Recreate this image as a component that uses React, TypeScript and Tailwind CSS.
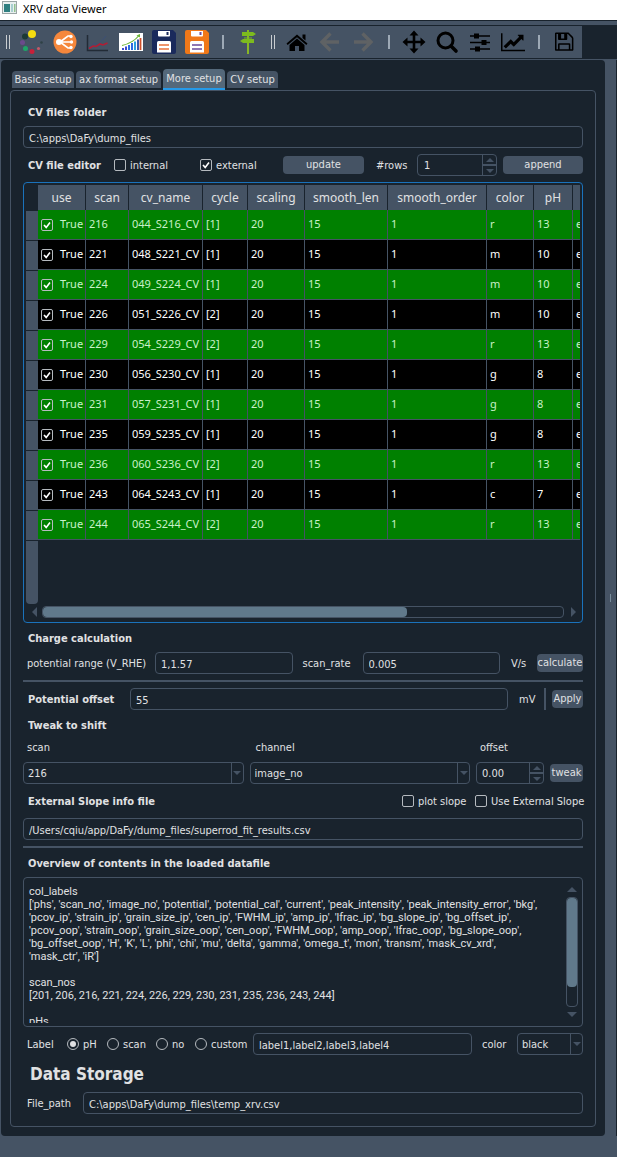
import React, { useState } from "react";

type IconProps = { children: React.ReactNode; box?: string };

function Svg({ children, box = "0 0 24 24" }: IconProps) {
  return (
    <svg viewBox={box} className="h-6 w-6" aria-hidden="true">
      {children}
    </svg>
  );
}

function Tool({ label, children }: { label: string; children: React.ReactNode }) {
  return (
    <button type="button" aria-label={label} className="flex w-[33px] shrink-0 items-center justify-center">
      {children}
    </button>
  );
}

function Grip() {
  return (
    <div className="flex w-4 shrink-0 items-center justify-center pl-0.5">
      <div className="h-3.5 w-1 border-x border-[#c9cdd0]" />
    </div>
  );
}

function Separator() {
  return (
    <div className="flex w-[18px] shrink-0 items-center justify-center pl-0.5">
      <div className="h-3.5 w-0.5 bg-[#9da9b5]" />
    </div>
  );
}

function Floppy({ body, line, dot }: { body: string; line: string; dot: string }) {
  return (
    <Svg>
      <path d="M2 0h19l3 3v19a2 2 0 0 1-2 2H2a2 2 0 0 1-2-2V2a2 2 0 0 1 2-2z" fill={body} />
      <path d="M6 1h12v4.500a1 1 0 0 1-1 1H7a1 1 0 0 1-1-1z" fill="#fff" />
      <rect x="14.500" y="2" width="2" height="3" fill={dot} />
      <path d="M6.500 11h11a1.500 1.500 0 0 1 1.500 1.500V22.500H5V12.500A1.500 1.500 0 0 1 6.500 11z" fill="#fff" />
      <path d="M7 15h10M7 19h10" stroke={line} strokeWidth="1.600" />
    </Svg>
  );
}

function Toolbar() {
  return (
    <div className="flex h-8 items-stretch bg-[#19232d]">
      <div className="-ml-px flex items-stretch bg-[#455364] pr-0.5">
        <Grip />
        <Tool label="Load">
          <Svg>
            <circle cx="12" cy="4" r="4" fill="#f5dc10" />
            <circle cx="5" cy="6.500" r="3" fill="#1c3a35" />
            <circle cx="2.500" cy="12.500" r="2.500" fill="#6b4a8c" />
            <circle cx="5.500" cy="18.500" r="2.500" fill="#1fa567" />
            <circle cx="12" cy="21.500" r="2.500" fill="#c8203a" />
            <circle cx="18.500" cy="18.500" r="1.600" fill="#c25a68" />
            <circle cx="21.500" cy="12.500" r="1.300" fill="#2f4146" />
          </Svg>
        </Tool>
        <Tool label="Connect">
          <Svg>
            <circle cx="12" cy="12" r="11.500" fill="#f5873c" />
            <path d="M5 12h13M7 12l8-6h3M7 12l8 6h3" stroke="#fff" strokeWidth="1.600" fill="none" />
            <circle cx="6" cy="12" r="3" fill="#fff" />
            <circle cx="18" cy="6.500" r="1.700" fill="#fff" />
            <circle cx="18.500" cy="12" r="1.700" fill="#fff" />
            <circle cx="18" cy="17.500" r="1.700" fill="#fff" />
          </Svg>
        </Tool>
        <Tool label="Plot">
          <Svg>
            <path d="M1.500 5v15.500H22" stroke="#222b36" strokeWidth="1.500" fill="none" />
            <path d="M3 18l5-5 4 2 8-9" stroke="#3b4f78" strokeWidth="0.900" fill="none" />
            <path d="M3 18.500l4-2.500 3 .500 4-2.500 3 1 4.500-2" stroke="#b01e35" strokeWidth="1.600" fill="none" />
          </Svg>
        </Tool>
        <Tool label="Bar chart">
          <Svg>
            <rect y="3" width="24" height="18" fill="#fff" />
            <path d="M4 18v2M7 16.500v3.500" stroke="#3b49d0" strokeWidth="2" />
            <path d="M10 15v5M13 13v7" stroke="#2a6be0" strokeWidth="2" />
            <path d="M16 11.500v8.500" stroke="#2aa0e0" strokeWidth="2" />
            <path d="M19 9.500v10.500" stroke="#3a5aa8" strokeWidth="2" />
            <path d="M21.500 8v12" stroke="#d0502a" strokeWidth="1.800" />
            <path d="M3 15.500Q14 13 20 5.500" stroke="#6cb536" strokeWidth="1.200" fill="none" />
            <path d="M17.500 5.500L21 4v3.500z" fill="#6cb536" />
          </Svg>
        </Tool>
        <Tool label="Save data">
          <Floppy body="#1a2a5c" line="#e8703a" dot="#1a2a5c" />
        </Tool>
        <Tool label="Save project">
          <Floppy body="#f07818" line="#6a4a9c" dot="#6a4a9c" />
        </Tool>
        <Separator />
        <Tool label="Guide">
          <Svg>
            <path d="M12 0v24" stroke="#8fc31f" strokeWidth="1.800" />
            <path d="M6 2h11l3 2-3 2H6zM18 9H7l-3 2 3 2h11zM8 7.500h8v1H8z" fill="#7dbb1e" />
          </Svg>
        </Tool>
        <Grip />
        <Tool label="Home">
          <Svg>
            <path d="M12 4.500l10.500 9-1.200 1.500L12 7.200 2.700 15l-1.200-1.500zM17.500 4.500h3v6l-3-2.600z" fill="#000" />
            <path d="M12 8.600l7.500 6.400v6h-5.500v-5h-4v5H4.500v-6z" fill="#000" />
          </Svg>
        </Tool>
        <Tool label="Back">
          <Svg>
            <path d="M12.500 3.500L4 12l8.500 8.500M4.500 12H21" stroke="#5f6264" strokeWidth="3.400" fill="none" />
          </Svg>
        </Tool>
        <Tool label="Forward">
          <Svg>
            <path d="M11.500 3.500L20 12l-8.500 8.500M19.500 12H3" stroke="#5f6264" strokeWidth="3.400" fill="none" />
          </Svg>
        </Tool>
        <Separator />
        <Tool label="Pan">
          <Svg>
            <path d="M12 3v18M3 12h18" stroke="#000" strokeWidth="2.600" />
            <path d="M12 .500l4.500 5h-9zM12 23.500l4.500-5h-9zM.500 12l5-4.500v9zM23.500 12l-5-4.500v9z" fill="#000" />
          </Svg>
        </Tool>
        <Tool label="Zoom">
          <Svg>
            <circle cx="10.500" cy="10.500" r="7.500" stroke="#000" strokeWidth="3" fill="none" />
            <path d="M16 16l5 5" stroke="#000" strokeWidth="3.600" strokeLinecap="round" />
          </Svg>
        </Tool>
        <Tool label="Subplots">
          <Svg>
            <path d="M2 6h20M2 12.500h20M2 19h20" stroke="#000" strokeWidth="1.500" />
            <path d="M6 3.500h5v5H6zM13.500 10h5v5h-5zM7 16.500h5v5H7z" fill="#000" />
          </Svg>
        </Tool>
        <Tool label="Edit axes">
          <Svg box="0 -200 2048 1900">
            <path
              fill="#000"
              d="M2048 1408v128h-2048v-1536h128v1408h1920zM1920 160v435q0 21-19.500 29.500t-35.500-7.500l-121-121-633 633q-10 10-23 10t-23-10l-233-233-416 416-192-192 585-585q10-10 23-10t23 10l233 233 464-464-121-121q-16-16-7.500-35.500t29.500-19.500h435q14 0 23 9t9 23z"
            />
          </Svg>
        </Tool>
        <Separator />
        <Tool label="Save figure">
          <Svg box="-120 -70 2000 2000">
            <path
              fill="#000"
              d="M512 1536h768v-384h-768v384zM1408 1536h128v-896q0-14-10-38.500t-20-34.500l-281-281q-10-10-34-20t-39-10v416q0 40-28 68t-68 28h-576q-40 0-68-28t-28-68v-416h-128v1280h128v-416q0-40 28-68t68-28h832q40 0 68 28t28 68v416zM896 608v-320q0-13-9.500-22.500t-22.500-9.500h-192q-13 0-22.500 9.500t-9.500 22.500v320q0 13 9.500 22.500t22.500 9.500h192q13 0 22.500-9.500t9.500-22.500zM1664 640v928q0 40-28 68t-68 28h-1344q-40 0-68-28t-28-68v-1344q0-40 28-68t68-28h928q40 0 88 20t76 48l280 280q28 28 48 76t20 88z"
            />
          </Svg>
        </Tool>
      </div>
    </div>
  );
}

const inputBase =
  "h-[22px] min-w-0 rounded border border-[#455364] bg-[#19232d] text-[11px] text-[#e0e1e3] outline-none";

function TextInput({ label, value, className }: { label: string; value: string; className: string }) {
  return <input aria-label={label} defaultValue={value} className={`${inputBase} px-[5px] pt-0.5 ${className}`} />;
}

function Heading({ children }: { children: React.ReactNode }) {
  return <h2 className="h-[17px] pl-[5px] text-[11px] leading-5 font-bold">{children}</h2>;
}

function PushButton({ children, className }: { children: React.ReactNode; className: string }) {
  return (
    <button
      type="button"
      className={`mb-px flex h-[18px] shrink-0 items-center justify-center rounded bg-[#455364] text-[11px] leading-[18px] ${className}`}
    >
      {children}
    </button>
  );
}

function TickBox({ checked, label }: { checked: boolean; label?: string }) {
  return (
    <span className="grid h-3 w-3 shrink-0">
      <input
        type="checkbox"
        defaultChecked={checked}
        aria-label={label}
        className="peer col-start-1 row-start-1 h-3 w-3 appearance-none rounded-xs border border-[#b5babf]"
      />
      <svg
        viewBox="0 0 12 12"
        aria-hidden="true"
        className="pointer-events-none invisible col-start-1 row-start-1 h-3 w-3 peer-checked:visible"
      >
        <path d="M3 6l2.200 2.400L9 3.500" stroke="#fff" strokeWidth="1.600" fill="none" />
      </svg>
    </span>
  );
}

function CheckField({ label, checked, className = "" }: { label: string; checked: boolean; className?: string }) {
  return (
    <label className={`flex shrink-0 items-center gap-1 ${className}`}>
      <TickBox checked={checked} />
      <span className="pt-0.5 whitespace-nowrap">{label}</span>
    </label>
  );
}

function Arrow({ d }: { d: string }) {
  return (
    <svg viewBox="0 0 8 4" className="h-1 w-2" aria-hidden="true">
      <path d={d} fill="#455364" />
    </svg>
  );
}

const UP = "M0 4L4 0l4 4z";
const DOWN = "M0 0l4 4 4-4z";

function SpinBox({ label, value, className }: { label: string; value: string; className: string }) {
  return (
    <div className={`flex h-[22px] shrink-0 rounded border border-[#455364] ${className}`}>
      <input aria-label={label} defaultValue={value} className="w-0 grow bg-transparent pt-0.5 text-[11px] outline-none" />
      <div className="flex w-[14px] shrink-0 flex-col border-l border-[#455364]">
        <button type="button" aria-label={`Increase ${label}`} className="flex h-[10px] items-center justify-center border-b border-[#455364]">
          <Arrow d={UP} />
        </button>
        <button type="button" aria-label={`Decrease ${label}`} className="flex h-[10px] items-center justify-center border-t border-[#455364]">
          <Arrow d={DOWN} />
        </button>
      </div>
    </div>
  );
}

function DropDown({ label, value, className }: { label: string; value: string; className: string }) {
  return (
    <div className={`relative h-[22px] min-w-0 ${className}`}>
      <select
        aria-label={label}
        defaultValue={value}
        className="h-full w-full appearance-none rounded border border-[#455364] bg-[#19232d] pt-0.5 pr-4 pl-1 text-[11px] text-[#e0e1e3] outline-none"
      >
        <option>{value}</option>
      </select>
      <span className="pointer-events-none absolute inset-y-px right-px flex w-3 items-center justify-center border-l border-[#455364]">
        <Arrow d={DOWN} />
      </span>
    </div>
  );
}

const columns = [
  ["use", "w-12"],
  ["scan", "w-[43px]"],
  ["cv_name", "w-[74px]"],
  ["cycle", "w-[45px]"],
  ["scaling", "w-[57px]"],
  ["smooth_len", "w-[83px]"],
  ["smooth_order", "w-[99px]"],
  ["color", "w-[47px]"],
  ["pH", "w-[39px]"],
];

const rows = [
  ["216", "044_S216_CV", "[1]", "r", "13"],
  ["221", "048_S221_CV", "[1]", "m", "10"],
  ["224", "049_S224_CV", "[1]", "m", "10"],
  ["226", "051_S226_CV", "[2]", "m", "10"],
  ["229", "054_S229_CV", "[2]", "r", "13"],
  ["230", "056_S230_CV", "[1]", "g", "8"],
  ["231", "057_S231_CV", "[1]", "g", "8"],
  ["235", "059_S235_CV", "[1]", "g", "8"],
  ["236", "060_S236_CV", "[2]", "r", "13"],
  ["243", "064_S243_CV", "[1]", "c", "7"],
  ["244", "065_S244_CV", "[2]", "r", "13"],
];

function CvTable() {
  return (
    <div className="rounded border border-[#1a72bb] px-0.5 pt-0.5 pb-1 font-['Noto_Sans',sans-serif]">
      <div className="overflow-hidden">
        <table className="w-[627px] table-fixed border-separate border-spacing-0 text-[11px]">
          <thead>
            <tr className="h-[25px]">
              <td className="w-3" />
              {columns.map(([name, width]) => (
                <th key={name} className={`${width} border-r border-[#19232d] bg-[#455364] p-0 text-[12px] leading-6 font-normal`}>
                  {name}
                </th>
              ))}
              <th className="bg-[#455364]" aria-label="electrolyte" />
            </tr>
          </thead>
          <tbody>
            {rows.map(([scan, name, cycle, color, ph], i) => {
              const cells = [scan, name, cycle, "20", "15", "1", color, ph];
              return (
                <tr key={scan} className={`h-[30px] ${i % 2 ? "bg-black text-white" : "bg-[#008000] text-[#c8f0c8]"}`}>
                  <th aria-label={`row ${i + 1}`} className="border-t border-[#19232d] bg-[#455364] p-0" />
                  <td className="border-r border-b border-[#455364] p-0">
                    <div className="flex items-center gap-[7px] pl-[3px]">
                      <TickBox checked label={`use scan ${scan}`} />
                      <span>True</span>
                    </div>
                  </td>
                  {cells.map((c, k) => (
                    <td key={k} className="border-r border-b border-[#455364] p-0 pl-[3px] whitespace-nowrap">
                      {c}
                    </td>
                  ))}
                  <td className="border-b border-[#455364] p-0 pl-[3px]">e</td>
                </tr>
              );
            })}
            <tr className="h-16">
              <th aria-label="unused rows" className="rounded-b border-t border-[#19232d] bg-[#455364]" />
            </tr>
          </tbody>
        </table>
      </div>
      <div className="mt-0.5 flex h-3 items-center gap-[5px] pr-0.5 pl-1.5">
        <svg viewBox="0 0 5 10" className="h-2.5 w-[5px]" aria-hidden="true">
          <path d="M5 0v10L0 5z" fill="#455364" />
        </svg>
        <div className="h-3 grow rounded border border-[#455364]">
          <div className="h-2.5 w-[70%] rounded bg-[#60798b]" />
        </div>
        <svg viewBox="0 0 5 10" className="mx-0.5 h-2.5 w-[5px]" aria-hidden="true">
          <path d="M0 0v10l5-5z" fill="#455364" />
        </svg>
      </div>
    </div>
  );
}

const overview = `col_labels
['phs', 'scan_no', 'image_no', 'potential', 'potential_cal', 'current', 'peak_intensity', 'peak_intensity_error', 'bkg',
'pcov_ip', 'strain_ip', 'grain_size_ip', 'cen_ip', 'FWHM_ip', 'amp_ip', 'lfrac_ip', 'bg_slope_ip', 'bg_offset_ip',
'pcov_oop', 'strain_oop', 'grain_size_oop', 'cen_oop', 'FWHM_oop', 'amp_oop', 'lfrac_oop', 'bg_slope_oop',
'bg_offset_oop', 'H', 'K', 'L', 'phi', 'chi', 'mu', 'delta', 'gamma', 'omega_t', 'mon', 'transm', 'mask_cv_xrd',
'mask_ctr', 'iR']

scan_nos
[201, 206, 216, 221, 224, 226, 229, 230, 231, 235, 236, 243, 244]

pHs`;

function Rule() {
  return <div className="h-0.5 bg-[#455364]" />;
}

function RadioField({ label, checked, onSelect, className }: { label: string; checked: boolean; onSelect: () => void; className: string }) {
  return (
    <label className={`flex shrink-0 items-center gap-1 ${className}`}>
      <span className="grid h-3 w-3">
        <input
          type="radio"
          name="label-kind"
          checked={checked}
          onChange={onSelect}
          className="peer col-start-1 row-start-1 h-3 w-3 appearance-none rounded-full border border-[#b5babf]"
        />
        <span className="invisible col-start-1 row-start-1 m-auto h-1.5 w-1.5 rounded-full bg-[#e0e1e3] peer-checked:visible" />
      </span>
      <span className="pt-0.5">{label}</span>
    </label>
  );
}

const tabs = [
  ["Basic setup", "w-[62px]"],
  ["ax format setup", "w-[85px]"],
  ["More setup", "w-[62px]"],
  ["CV setup", "w-[51px]"],
];

export default function App() {
  const [tab, setTab] = useState("More setup");
  const [kind, setKind] = useState("pH");

  return (
    <div className="flex min-h-screen flex-col bg-[#455364] font-['DejaVu_Sans_Condensed','Noto_Sans',sans-serif] text-[11px] text-[#e0e1e3]">
      <header className="flex h-5 items-start gap-[6px] bg-white pl-0.5 text-black">
        <svg viewBox="0 0 15 13" className="mt-px h-[13px] w-[15px]" aria-hidden="true">
          <rect x=".5" y=".5" width="14" height="12" fill="#e8efef" stroke="#9aa5a5" />
          <rect x="2" y="3" width="6" height="8" fill="#2f7f80" />
          <rect x="9" y="3" width="2" height="8" fill="#a8cfd0" />
          <rect x="12" y="3" width="1.500" height="8" fill="#8fc08f" />
        </svg>
        <h1 className="font-['Noto_Sans',sans-serif] text-[11px] leading-[18px]">XRV data Viewer</h1>
      </header>
      <div className="h-1.5 border-y border-[#19232d]" />
      <Toolbar />
      <div className="mb-px h-px bg-[#19232d]" />

      <div className="flex">
        <main className="min-w-0 grow pl-px">
          <div className="rounded bg-[#19232d] px-[9px] pt-[9px] pb-[9px]">
            <div role="tablist" className="flex h-[21px] items-end gap-0.5 pl-0.5">
              {tabs.map(([name, width]) => (
                <button
                  key={name}
                  type="button"
                  role="tab"
                  aria-selected={tab === name}
                  onClick={() => setTab(name)}
                  className={`${width} shrink-0 rounded-t whitespace-nowrap ${
                    tab === name
                      ? "h-[21px] border-b-2 border-[#259ae9] bg-[#54687a] leading-[19px]"
                      : "mb-0.5 h-[17px] bg-[#455364] leading-[18px]"
                  }`}
                >
                  {name}
                </button>
              ))}
            </div>
            <div className="flex flex-col gap-1.5 rounded border border-[#455364] p-3">
              <Heading>CV files folder</Heading>
              <TextInput label="CV files folder" value={"C:\\apps\\DaFy\\dump_files"} className="w-full" />

              <div className="flex h-[22px] items-center">
                <h2 className="w-[91px] shrink-0 pt-0.5 pl-[5px] font-bold whitespace-nowrap">CV file editor</h2>
                <CheckField label="internal" checked={false} className="w-[86px]" />
                <CheckField label="external" checked className="w-[83px]" />
                <PushButton className="w-[81px]">update</PushButton>
                <span className="w-[53px] shrink-0 pt-0.5 pl-3">#rows</span>
                <SpinBox label="rows" value="1" className="w-20 pl-1.5" />
                <PushButton className="ml-1.5 w-20 grow">append</PushButton>
              </div>

              <CvTable />

              <Heading>Charge calculation</Heading>
              <div className="flex h-[22px] items-center">
                <span className="w-[132px] shrink-0 pt-0.5 pl-1 whitespace-nowrap">potential range (V_RHE)</span>
                <TextInput label="potential range" value="1,1.57" className="w-0 grow" />
                <span className="w-[70px] shrink-0 pt-0.5 pl-2.5">scan_rate</span>
                <TextInput label="scan rate" value="0.005" className="w-0 grow" />
                <span className="w-[37px] shrink-0 pt-0.5 pl-[11px]">V/s</span>
                <PushButton className="w-[46px]">calculate</PushButton>
              </div>
              <Rule />
              <div className="flex h-[22px] items-center">
                <h2 className="w-[107px] shrink-0 pt-0.5 pl-[5px] font-bold whitespace-nowrap">Potential offset</h2>
                <TextInput label="potential offset" value="55" className="w-0 grow" />
                <span className="w-9 shrink-0 pt-0.5 pl-[11px]">mV</span>
                <div className="mr-1.5 h-[22px] w-0.5 bg-[#455364]" />
                <PushButton className="w-[31px]">Apply</PushButton>
              </div>
              <Heading>Tweak to shift</Heading>
              <div className="flex h-[17px] items-center">
                <span className="w-0 grow pt-0.5 pl-1">scan</span>
                <span className="w-0 grow pt-0.5 pl-1">channel</span>
                <span className="w-[103px] shrink-0 pt-0.5">offset</span>
              </div>
              <div className="flex h-[22px] items-center gap-1.5">
                <DropDown label="scan" value="216" className="w-0 grow" />
                <DropDown label="channel" value="image_no" className="w-0 grow" />
                <SpinBox label="offset" value="0.00" className="w-[68px] pl-[5px]" />
                <PushButton className="w-[33px]">tweak</PushButton>
              </div>
              <div className="flex h-[22px] items-center">
                <h2 className="grow pt-0.5 pl-[5px] font-bold">External Slope info file</h2>
                <CheckField label="plot slope" checked={false} className="w-[73px]" />
                <CheckField label="Use External Slope" checked={false} className="w-[108px]" />
              </div>
              <TextInput label="slope info file" value="/Users/cqiu/app/DaFy/dump_files/superrod_fit_results.csv" className="w-full" />
              <Rule />
              <Heading>Overview of contents in the loaded datafile</Heading>

              <div className="flex h-[150px] rounded border border-[#455364] py-[3px] pr-1">
                <textarea
                  readOnly
                  aria-label="Overview of contents"
                  value={overview}
                  className="w-0 grow resize-none overflow-hidden pt-1 pl-[5px] font-['Roboto',sans-serif] leading-[13px] whitespace-pre outline-none"
                />
                <div className="flex w-3 shrink-0 flex-col items-center gap-[5px] py-1.5">
                  <svg viewBox="0 0 10 5" className="h-[5px] w-2.5" aria-hidden="true">
                    <path d="M0 5l5-5 5 5z" fill="#455364" />
                  </svg>
                  <div className="w-3 grow rounded border border-[#455364]">
                    <div className="h-[82%] w-2.5 rounded bg-[#60798b]" />
                  </div>
                  <svg viewBox="0 0 10 5" className="h-[5px] w-2.5" aria-hidden="true">
                    <path d="M0 0l5 5 5-5z" fill="#455364" />
                  </svg>
                </div>
              </div>

              <div className="flex h-[22px] items-center">
                <span className="w-[44px] shrink-0 pt-0.5 pl-1">Label</span>
                <RadioField label="pH" checked={kind === "pH"} onSelect={() => setKind("pH")} className="w-10" />
                <RadioField label="scan" checked={kind === "scan"} onSelect={() => setKind("scan")} className="w-[49px]" />
                <RadioField label="no" checked={kind === "no"} onSelect={() => setKind("no")} className="w-[39px]" />
                <RadioField label="custom" checked={kind === "custom"} onSelect={() => setKind("custom")} className="w-[58px]" />
                <TextInput label="custom labels" value="label1,label2,label3,label4" className="w-0 grow" />
                <span className="w-[45px] shrink-0 pt-0.5 pl-2.5">color</span>
                <DropDown label="color" value="black" className="w-[66px] shrink-0" />
              </div>
              <h2 className="h-[25px] pl-[7px] text-[17px] leading-[26px] font-bold">Data Storage</h2>
              <div className="flex h-[22px] items-center">
                <span className="w-[60px] shrink-0 pt-0.5 pl-1">File_path</span>
                <TextInput label="File path" value={"C:\\apps\\DaFy\\dump_files\\temp_xrv.csv"} className="w-0 grow" />
              </div>
            </div>
          </div>
        </main>
        <div className="flex w-[11px] shrink-0 items-center justify-center">
          <div className="h-2 w-px bg-[#788d9c]" />
        </div>
        <div className="w-px shrink-0 bg-[#19232d]" />
      </div>
    </div>
  );
}
